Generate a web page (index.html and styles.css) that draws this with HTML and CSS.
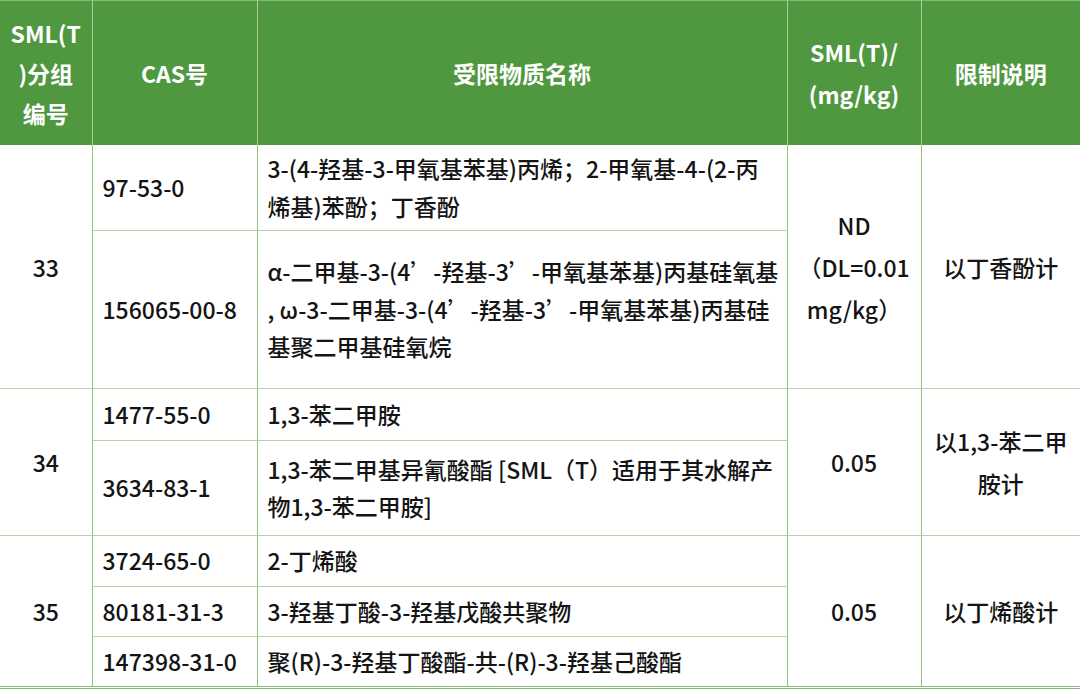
FILE: index.html
```html
<!DOCTYPE html>
<html lang="zh-CN">
<head>
<meta charset="utf-8">
<title>SML(T)</title>
<link rel="stylesheet" href="styles.css">
</head>
<body>
<table class="sml">
  <colgroup>
    <col class="c1"><col class="c2"><col class="c3"><col class="c4"><col class="c5">
  </colgroup>
  <thead>
    <tr>
      <th class="h-group">SML(T<br>)分组<br>编号</th>
      <th>CAS号</th>
      <th>受限物质名称</th>
      <th class="h-sml">SML(T)/<br>(mg/kg)</th>
      <th>限制说明</th>
    </tr>
  </thead>
  <tbody>
    <tr class="r86">
      <td rowspan="2" class="ctr grp">33</td>
      <td>97-53-0</td>
      <td>3-(4-羟基-3-甲氧基苯基)丙烯；2-甲氧基-4-(2-丙<br>烯基)苯酚；丁香酚</td>
      <td rowspan="2" class="ctr">ND<br>（DL=0.01<br>mg/kg）</td>
      <td rowspan="2" class="ctr">以丁香酚计</td>
    </tr>
    <tr class="r158">
      <td>156065-00-8</td>
      <td>α-二甲基-3-(4’-羟基-3’-甲氧基苯基)丙基硅氧基<br>, ω-3-二甲基-3-(4’-羟基-3’-甲氧基苯基)丙基硅<br>基聚二甲基硅氧烷</td>
    </tr>
    <tr class="r52 grp-top">
      <td rowspan="2" class="ctr grp">34</td>
      <td>1477-55-0</td>
      <td>1,3-苯二甲胺</td>
      <td rowspan="2" class="ctr">0.05</td>
      <td rowspan="2" class="ctr">以1,3-苯二甲<br>胺计</td>
    </tr>
    <tr class="r95">
      <td>3634-83-1</td>
      <td>1,3-苯二甲基异氰酸酯 [SML（T）适用于其水解产<br>物1,3-苯二甲胺]</td>
    </tr>
    <tr class="r51 grp-top">
      <td rowspan="3" class="ctr grp">35</td>
      <td>3724-65-0</td>
      <td>2-丁烯酸</td>
      <td rowspan="3" class="ctr">0.05</td>
      <td rowspan="3" class="ctr">以丁烯酸计</td>
    </tr>
    <tr class="r50">
      <td>80181-31-3</td>
      <td>3-羟基丁酸-3-羟基戊酸共聚物</td>
    </tr>
    <tr class="r50 last">
      <td>147398-31-0</td>
      <td>聚(R)-3-羟基丁酸酯-共-(R)-3-羟基己酸酯</td>
    </tr>
  </tbody>
</table>
</body>
</html>
```

FILE: styles.css
```css
html, body {
  margin: 0;
  padding: 0;
  background: #ffffff;
}

body {
  width: 1080px;
  height: 693px;
  overflow: hidden;
  font-family: "Noto Sans CJK SC", "Noto Sans", sans-serif;
  color: #141414;
}

.sml {
  width: 1080px;
  border-collapse: collapse;
  table-layout: fixed;
}

.c1 { width: 92px; }
.c2 { width: 165px; }
.c3 { width: 530px; }
.c4 { width: 134px; }
.c5 { width: 159px; }

.sml th {
  height: 144px;
  background: #4f983f;
  color: #ffffff;
  font-size: 23px;
  font-weight: 700;
  line-height: 40px;
  text-align: center;
  vertical-align: middle;
  padding: 0 4px;
  border-top: 1px solid #86b978;
  border-left: 1px solid #a9d09c;
  border-right: 1px solid #a9d09c;
}

.sml th:first-child { border-left: none; }
.sml th:last-child { border-right: none; }

.sml th.h-sml { line-height: 42px; }

.sml td {
  font-size: 23px;
  line-height: 37.5px;
  font-weight: 500;
  text-align: left;
  vertical-align: middle;
  padding: 0 0 0 10px;
  border-left: 1px solid #94c186;
  border-right: 1px solid #94c186;
  border-top: 1px solid #b3d4a6;
  border-bottom: 1px solid #b3d4a6;
  white-space: nowrap;
}

.sml td:first-child { border-left: none; }
.sml td:last-child { border-right: none; }

.sml td.ctr {
  text-align: center;
  line-height: 42px;
  padding: 0;
}

.sml td.grp { border-left: none; }

.r86 td { height: 85px; }
.r158 td { height: 157px; }
.r52 td { height: 51px; }
.r95 td { height: 94px; }
.r51 td { height: 50px; }
.r50 td { height: 49px; }

.sml tbody tr:first-child td { border-top: none; }

.sml tbody tr.grp-top td { border-top: 1px solid #94c186; }

.sml tbody tr.last td,
.sml td[rowspan="3"] {
  border-bottom: 3px double #86b978;
}
```
